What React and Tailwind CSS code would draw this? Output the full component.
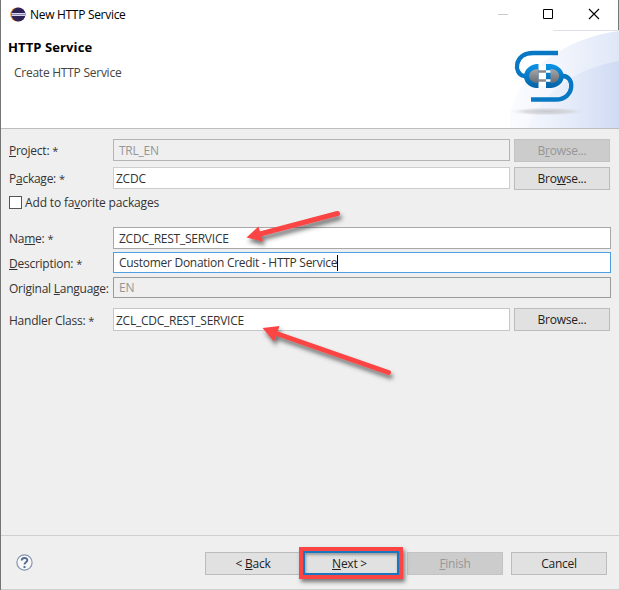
import React from "react";

const U = ({ children }) => (
  <span className="underline decoration-1 underline-offset-[1px]">{children}</span>
);

const Label = ({ children, required = false }) => (
  <div className="w-[104px] shrink-0 whitespace-nowrap pt-0.5">
    {children}
    {required && <span className="ml-[3px] text-[11px]">*</span>}
  </div>
);

const Button = ({ children, disabled = false, className = "" }) => (
  <button
    className={`flex h-[23px] w-24 shrink-0 items-center justify-center border pt-px ${
      disabled
        ? "border-[#c3c3c3] bg-[#cccccc] text-[#969696]"
        : "border-[#bcbcbc] bg-[#e1e1e1] text-[#222]"
    } ${className}`}
  >
    <span className="whitespace-pre">{children}</span>
  </button>
);

function EclipseIcon() {
  return (
    <svg className="h-4 w-4" viewBox="0 0 16 16">
      <circle cx="7.2" cy="7.5" r="7" fill="#f39a3c" />
      <circle cx="8.4" cy="7.5" r="7.1" fill="#2c2255" />
      <path d="M1.5 6.500h13.700M1.500 8.500h13.700" stroke="#d8d5ea" strokeWidth="1" />
      <path d="M1.500 7.500h14" stroke="#8f88b4" strokeWidth="1" />
    </svg>
  );
}

function Banner() {
  return (
    <svg className="h-[98px] w-[109px] shrink-0" viewBox="510 30 109 98">
      <defs>
        <linearGradient id="sky" x1="0" x2="1">
          <stop offset="0" stopColor="#fbfcff" />
          <stop offset="0.5" stopColor="#f1f4fc" />
          <stop offset="1" stopColor="#dfe7f7" />
        </linearGradient>
        <linearGradient id="wave" x1="0" x2="1">
          <stop offset="0" stopColor="#f0f4fd" stopOpacity="0.5" />
          <stop offset="1" stopColor="#d0dbf3" />
        </linearGradient>
        <linearGradient id="plug" x1="0" x2="0" y1="0" y2="1">
          <stop offset="0" stopColor="#0a94e8" />
          <stop offset="1" stopColor="#0562a5" />
        </linearGradient>
        <linearGradient id="metal" x1="0" x2="0" y1="0" y2="1">
          <stop offset="0" stopColor="#a4a7ac" />
          <stop offset="1" stopColor="#686c73" />
        </linearGradient>
        <radialGradient id="ground">
          <stop offset="0" stopColor="#c6c8ce" />
          <stop offset="0.6" stopColor="#d2d4d9" stopOpacity="0.8" />
          <stop offset="1" stopColor="#e4e7ef" stopOpacity="0" />
        </radialGradient>
      </defs>
      <path d="M507 128C513 79 554 40 619 31V128Z" fill="url(#sky)" />
      <path d="M527 128C541 93 576 68 619 61V128Z" fill="url(#wave)" />
      <path d="M553 30.5h66" stroke="#dfe1e6" />
      <ellipse cx="548" cy="111.500" rx="38" ry="4" fill="url(#ground)" />
      <path d="M558 53H533C514 53 513 74 524 76H527" fill="none" stroke="#0878c4" strokeWidth="4.300" />
      <path d="M531 99.500H556C575 99.500 575 76 563 76" fill="none" stroke="#0878c4" strokeWidth="4.300" />
      <path d="M538 66h8v20h-8z" fill="#fff" />
      <path d="M538.500 64H536C520 67 520 86 536 88H538.500Z" fill="url(#plug)" />
      <path d="M546 64H551C568 67 568 86 551 88H546Z" fill="url(#plug)" />
      <path d="M538.500 69C526 69 526 83 538.500 83Z" fill="url(#metal)" />
      <path d="M550.500 69C562 69 562 83 550.500 83Z" fill="url(#metal)" />
      <path d="M538 71.500h8M538 80.500h8" stroke="#85898e" strokeWidth="2.500" />
      <path d="M546 71.500h4.500M546 80.500h4.500" stroke="#fff" strokeWidth="2.500" />
    </svg>
  );
}

function Arrows() {
  return (
    <svg className="pointer-events-none absolute left-[234px] top-[200px] h-[190px] w-[170px]" viewBox="235 200 170 190">
      <defs>
        <filter id="drop" x="-20%" y="-30%" width="150%" height="190%">
          <feDropShadow dx="2" dy="4" stdDeviation="2" floodColor="#333" floodOpacity="0.65" />
        </filter>
      </defs>
      <g fill="#fb4545" stroke="#fb4545" filter="url(#drop)">
        <path d="M337.500 213.500 260 234" strokeWidth="5" strokeLinecap="round" />
        <path d="M246.500 237.500 258.500 226.500 263 241.500Z" stroke="none" />
      </g>
      <g fill="#fb4545" stroke="#fb4545" filter="url(#drop)">
        <path d="M388.500 372.500 275 333" strokeWidth="5" strokeLinecap="round" />
        <path d="M262.500 328 279.500 326 274 341.500Z" stroke="none" />
      </g>
    </svg>
  );
}

export default function App() {
  return (
    <div className="relative flex h-[590px] w-[619px] flex-col overflow-hidden border-l border-[#747474] bg-[#efefef] font-['Open_Sans','Noto_Sans',sans-serif] text-xs leading-4 tracking-[-0.25px] text-[#333]">
      <header className="flex h-[129px] shrink-0 flex-col border-b border-[#bdbdbd] bg-white">
        <div className="flex h-[30px] shrink-0 border-r border-[#777] pr-[17px]">
          <div className="flex flex-1 items-center gap-1 pl-[9px] text-black">
            <EclipseIcon />
            <span className="tracking-[-0.3px]">New HTTP Service</span>
          </div>
          <svg className="mt-1 h-5 w-[104px]" viewBox="497 4 104 20" fill="none">
            <path d="M498 14.500h10" stroke="#c9c9c9" />
            <path d="M543.500 9.500h9v9h-9z" stroke="#000" />
            <path d="m589 9 10 10M599 9l-10 10" stroke="#000" strokeWidth="1.100" />
          </svg>
        </div>
        <div className="flex flex-1 justify-between">
          <div className="pl-[7px] pt-[9px]">
            <h1 className="text-[13px] font-bold leading-4 tracking-[0.1px] text-black">HTTP Service</h1>
            <p className="pl-[6px] pt-[10px] tracking-[-0.25px] text-[#444]">Create HTTP Service</p>
          </div>
          <Banner />
        </div>
      </header>

      <main className="flex flex-1 flex-col pl-2 pt-[10px]">
        <div className="flex h-[22px] items-center">
          <Label required><U>P</U>roject:</Label>
          <div className="mr-1 flex h-[22px] w-[397px] items-center border border-[#b4b4b4] pl-[5px] pt-px text-[#969696]">TRL_EN</div>
          <Button disabled>B<U>r</U>owse...</Button>
        </div>
        <div className="mt-[6px] flex h-[22px] items-center">
          <Label required>P<U>a</U>ckage:</Label>
          <div className="mr-1 flex h-[22px] w-[397px] items-center border border-[#cdcdd0] bg-white pl-[2px] pt-px">ZCDC</div>
          <Button>Bro<U>w</U>se...</Button>
        </div>
        <div className="mt-[6px] flex h-[14px] items-center gap-[3px]">
          <span className="h-[13px] w-[13px] border border-[#555] bg-white" />
          <span className="pt-px tracking-[-0.15px]">Add to fa<U>v</U>orite packages</span>
        </div>
        <div className="mt-[18px] flex h-[22px] items-center">
          <Label required>Na<U>m</U>e:</Label>
          <div className="flex h-[22px] w-[498px] items-center border border-[#a8a8a8] bg-white pl-[5px] pt-px">ZCDC_REST_SERVICE</div>
        </div>
        <div className="mt-[3px] flex h-[21px] items-center">
          <Label required><U>D</U>escription:</Label>
          <div className="flex h-[21px] w-[498px] items-center border border-[#4e9ee0] bg-white pl-[5px]">
            <span className="pt-px tracking-[-0.28px]">Customer Donation Credit - HTTP Service</span>
            <span className="h-4 w-px bg-black" />
          </div>
        </div>
        <div className="mt-[4px] flex h-[21px] items-center">
          <Label>Original <U>L</U>anguage:</Label>
          <div className="flex h-[21px] w-[498px] items-center border border-[#9b9b9b] pl-[5px] pt-px text-[#969696]">EN</div>
        </div>
        <div className="mt-[10px] flex h-[23px] items-center">
          <Label required>Handler Class:</Label>
          <div className="mr-1 flex h-[23px] w-[397px] items-center border border-[#c6c6c8] bg-white pl-[2px] pt-0.5">ZCL_CDC_REST_SERVICE</div>
          <Button>Browse...</Button>
        </div>
      </main>

      <footer className="flex h-[55px] shrink-0 items-center justify-between border-y border-[#cfcfcf] pl-[15px] pr-[12px]">
        <svg className="h-[17px] w-[17px]" viewBox="0 0 17 17" fill="none">
          <circle cx="8.500" cy="8.500" r="7.600" fill="#f7f8fa" stroke="#8495af" strokeWidth="1.200" />
          <path d="M5.700 6.400C5.700 3.200 11.300 3.200 11.300 6.200C11.300 8.200 8.500 8.200 8.500 10.400M8.500 12v2" stroke="#566b8f" strokeWidth="1.900" />
        </svg>
        <div className="flex items-center pt-px">
          <Button>{"< "}<U>B</U>ack</Button>
          <div className="relative z-10 ml-[-2px] mr-1 border-4 border-[#fb4545] shadow-[2px_3px_4px_#777]">
            <button className="flex h-6 w-24 items-center justify-center border-2 border-[#1976bf] bg-[#e1e1e1] text-[#222] shadow-[inset_1px_2px_3px_#999]">
              <span className="whitespace-pre pr-[3px] pt-px"><U>N</U>ext {">"}</span>
            </button>
          </div>
          <Button disabled><U>F</U>inish</Button>
          <Button className="ml-2">Cancel</Button>
        </div>
      </footer>
      <Arrows />
    </div>
  );
}
